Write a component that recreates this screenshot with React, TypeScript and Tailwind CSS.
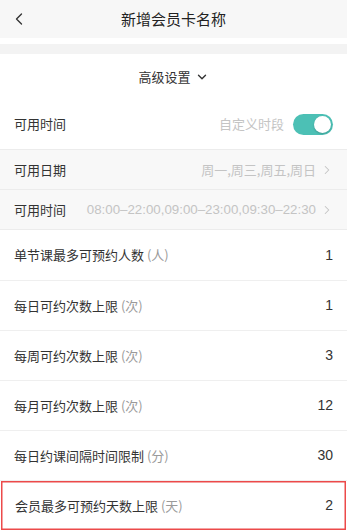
import { ChevronLeft, ChevronRight, ChevronDown } from "lucide-react";

const font = { fontFamily: '"Noto Sans CJK SC", "Liberation Sans", sans-serif' };

const limits = [
  { label: "单节课最多可预约人数", unit: "(人)", value: "1" },
  { label: "每日可约次数上限", unit: "(次)", value: "1" },
  { label: "每周可约次数上限", unit: "(次)", value: "3" },
  { label: "每月可约次数上限", unit: "(次)", value: "12" },
  { label: "每日约课间隔时间限制", unit: "(分)", value: "30" },
];

function LimitRow({ label, unit, value, first }: { label: string; unit: string; value: string; first?: boolean }) {
  return (
    <div className={`flex items-center justify-between border-b border-[#efefef] px-[14px] ${first ? "h-[51px]" : "h-[50px]"}`}>
      <span className="text-[13px] text-[#333]">
        {label} <span className="text-[#9a9a9a]">{unit}</span>
      </span>
      <span className="font-['Liberation_Sans'] text-[14px] text-[#333]">{value}</span>
    </div>
  );
}

export default function App() {
  return (
    <div className="h-[531px] w-[347px] overflow-hidden bg-white" style={font}>
      <header className="flex h-[38px] items-center bg-[#f7f7f7] px-[9px]">
        <ChevronLeft size={20} strokeWidth={1.6} className="text-[#333]" />
        <h1 className="flex-1 pr-[20px] text-center text-[15px] text-[#222]">新增会员卡名称</h1>
      </header>
      <div className="h-[6px] bg-white" />
      <div className="h-[10px] bg-[#f3f3f3]" />

      <div className="flex h-[45px] items-center justify-center gap-[4px] text-[13px] text-[#333]">
        高级设置
        <ChevronDown size={14} strokeWidth={2.4} className="text-[#333]" />
      </div>

      <div className="flex h-[50px] items-center justify-between px-[14px]">
        <span className="text-[13px] text-[#333]">可用时间</span>
        <div className="flex items-center gap-[9px]">
          <span className="text-[13px] text-[#c4c4c4]">自定义时段</span>
          <div className="flex h-[21px] w-[40px] items-center justify-end rounded-full bg-[#4cc0b5] p-[2px]">
            <div className="h-[17px] w-[17px] rounded-full bg-white shadow-[0_1px_2px_rgba(0,0,0,0.2)]" />
          </div>
        </div>
      </div>

      <div className="border-t border-[#ececec] bg-[#f8f8f8]">
        <div className="flex h-[40px] items-center justify-between border-b border-[#ececec] pl-[14px] pr-[13px]">
          <span className="text-[13px] text-[#333]">可用日期</span>
          <span className="flex items-center gap-[4px] text-[13px] text-[#c4c4c4]">
            周一,周三,周五,周日
            <ChevronRight size={14} strokeWidth={1.8} />
          </span>
        </div>
        <div className="flex h-[40px] items-center justify-between border-b border-[#ececec] pl-[14px] pr-[13px]">
          <span className="text-[13px] text-[#333]">可用时间</span>
          <span className="flex items-center gap-[4px] font-['Liberation_Sans'] text-[13.3px] text-[#c4c4c4]">
            08:00–22:00,09:00–23:00,09:30–22:30
            <ChevronRight size={14} strokeWidth={1.8} />
          </span>
        </div>
      </div>

      {limits.map((r, i) => (
        <LimitRow key={r.label} {...r} first={i === 0} />
      ))}

      <div className="mx-[1px] flex h-[49px] items-center justify-between pl-[14px] pr-[13px] shadow-[inset_0_0_0_1.5px_#ec4a4a]">
        <span className="text-[13px] text-[#333]">
          会员最多可预约天数上限 <span className="text-[#9a9a9a]">(天)</span>
        </span>
        <span className="font-['Liberation_Sans'] text-[14px] text-[#333]">2</span>
      </div>
    </div>
  );
}
